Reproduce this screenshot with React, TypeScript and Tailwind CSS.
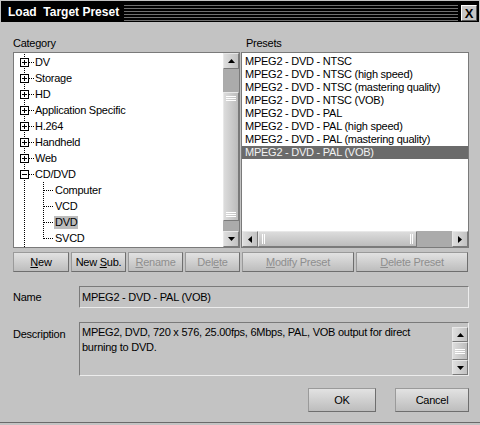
import React from "react";

const topItems = ["DV", "Storage", "HD", "Application Specific", "H.264", "Handheld", "Web"];
const dvdChildren = ["Computer", "VCD", "DVD", "SVCD"];
const presets = [
    "MPEG2 - DVD - NTSC",
    "MPEG2 - DVD - NTSC (high speed)",
    "MPEG2 - DVD - NTSC (mastering quality)",
    "MPEG2 - DVD - NTSC (VOB)",
    "MPEG2 - DVD - PAL",
    "MPEG2 - DVD - PAL (high speed)",
    "MPEG2 - DVD - PAL (mastering quality)",
    "MPEG2 - DVD - PAL (VOB)",
];

function Arrow({dir}: {dir: "up" | "down" | "left" | "right"}) {
    const pts = {
        up: "0,4 7,4 3.5,0",
        down: "0,0 7,0 3.5,4",
        left: "4,0 4,7 0,3.5",
        right: "0,0 0,7 4,3.5",
    }[dir];
    const vertical = dir === "up" || dir === "down";
    return <svg width={vertical ? 7 : 4} height={vertical ? 4 : 7}>
        <polygon points={pts} fill="#000"/>
    </svg>
}

function ScrollBtn({dir, className = ""}: {dir: "up" | "down" | "left" | "right", className?: string}) {
    return <div
        className={`flex items-center justify-center border border-t-[#e8e8e8] border-l-[#e8e8e8] border-b-[#7a7a7a] border-r-[#7a7a7a] bg-linear-to-r from-[#dedede] to-[#c2c2c2] ${className}`}>
        <Arrow dir={dir}/>
    </div>
}

function Grip({vertical}: {vertical: boolean}) {
    if (vertical) {
        return <div className="flex flex-col gap-[1px] px-[2px]">
            <div className="h-[1px] bg-white"/>
            <div className="h-[1px] bg-white"/>
            <div className="h-[1px] bg-white"/>
        </div>
    }
    return <div className="flex gap-[1px] py-[2px] h-full">
        <div className="w-[1px] bg-white"/>
        <div className="w-[1px] bg-white"/>
    </div>
}

function TopGutter({open}: {open: boolean}) {
    return <svg width={20} height={16} className="shrink-0" shapeRendering="crispEdges">
        <line x1={10.5} y1={0} x2={10.5} y2={16} stroke="#000" strokeDasharray="1 1"/>
        <line x1={15} y1={8.5} x2={20} y2={8.5} stroke="#000" strokeDasharray="1 1"/>
        <rect x={6.5} y={4.5} width={8} height={8} fill="#fff" stroke="#000"/>
        <line x1={8} y1={8.5} x2={13} y2={8.5} stroke="#000"/>
        {!open && <line x1={10.5} y1={6} x2={10.5} y2={11} stroke="#000"/>}
    </svg>
}

function ChildGutter({last}: {last: boolean}) {
    return <svg width={40} height={16} className="shrink-0" shapeRendering="crispEdges">
        <line x1={10.5} y1={0} x2={10.5} y2={16} stroke="#000" strokeDasharray="1 1"/>
        <line x1={29.5} y1={0} x2={29.5} y2={last ? 9 : 16} stroke="#000" strokeDasharray="1 1"/>
        <line x1={30} y1={8.5} x2={39} y2={8.5} stroke="#000" strokeDasharray="1 1"/>
    </svg>
}

function Button({children, width, height = "h-[20px]", disabled = false}: {
    children: React.ReactNode,
    width: string,
    height?: string,
    disabled?: boolean
}) {
    return <div
        className={`${width} ${height} flex items-center justify-center border border-t-[#9a9a9a] border-l-[#9a9a9a] border-b-[#6e6e6e] border-r-[#6e6e6e] bg-linear-to-b from-[#e2e2e2] to-[#bdbdbd] ${disabled ? "text-[#8e8e8e]" : "text-black"}`}>
        <span>{children}</span>
    </div>
}

export default function App() {
    return <div
        className="w-[480px] h-[425px] bg-[#c3c3c3] overflow-hidden font-['Liberation_Sans',Arial,sans-serif] text-[11px] tracking-[-0.25px] text-black">
        <div className="h-[423px] flex flex-col border-b border-[#6a6a6a] pt-[1px] px-[1px]">
            <div className="h-[21px] bg-black flex">
                <div className="ml-[7px] self-center text-white font-bold text-[12px] tracking-normal whitespace-pre leading-none">
                    Load  Target Preset
                </div>
                <div
                    className="ml-[5px] mt-[2px] h-[18px] flex-1 bg-[repeating-linear-gradient(to_bottom,#000_0px,#000_2px,#707070_2px,#707070_3px)]"/>
                <div
                    className="ml-[3px] mr-[2px] mt-[4px] w-[16px] h-[16px] flex items-center justify-center bg-[#c6c6c6] border border-t-white border-l-white border-b-[#5a5a5a] border-r-[#5a5a5a] font-bold text-[13px] leading-none tracking-normal">
                    X
                </div>
            </div>

            <div className="flex flex-col pl-[12px] pr-[10px]">
                <div className="flex gap-[1px] mt-[14px] h-[14px] leading-[14px]">
                    <div className="w-[227px]">Category</div>
                    <div className="flex-1 pl-[5px]">Presets</div>
                </div>

                <div className="flex gap-[1px] mt-[2px] h-[196px]">
                    <div className="w-[227px] border border-[#7a7a7a] flex">
                        <div className="flex-1 bg-white pt-[1px] overflow-hidden">
                            {topItems.map(item => (
                                <div key={item} className="flex items-center h-[16px] leading-[16px] whitespace-nowrap">
                                    <TopGutter open={false}/>
                                    <span className="px-[1px]">{item}</span>
                                </div>
                            ))}
                            <div className="flex items-center h-[16px] leading-[16px]">
                                <TopGutter open={true}/>
                                <span className="px-[1px]">CD/DVD</span>
                            </div>
                            {dvdChildren.map((item, i) => (
                                <div key={item} className="flex items-center h-[16px]">
                                    <ChildGutter last={i === dvdChildren.length - 1}/>
                                    <span
                                        className={`px-[1px] h-[13px] leading-[13px] ${item === "DVD" ? "bg-[#bcbcbc]" : ""}`}>{item}</span>
                                </div>
                            ))}
                            <div className="flex h-[16px]">
                                <svg width={20} height={16} shapeRendering="crispEdges">
                                    <line x1={10.5} y1={0} x2={10.5} y2={16} stroke="#000" strokeDasharray="1 1"/>
                                </svg>
                            </div>
                        </div>
                        <div className="w-[16px] flex flex-col bg-[#ababab]">
                            <ScrollBtn dir="up" className="h-[16px]"/>
                            <div className="h-[23px]"/>
                            <div
                                className="h-[129px] flex flex-col justify-between py-[3px] border border-t-[#e8e8e8] border-l-[#e8e8e8] border-b-[#7a7a7a] border-r-[#7a7a7a] bg-linear-to-r from-[#dcdcdc] to-[#bcbcbc]">
                                <Grip vertical={true}/>
                                <Grip vertical={true}/>
                            </div>
                            <div className="flex-1"/>
                            <ScrollBtn dir="down" className="h-[16px]"/>
                        </div>
                    </div>

                    <div className="flex-1 border border-[#7a7a7a] flex flex-col">
                        <div className="flex-1 bg-white pt-[2px] overflow-hidden">
                            {presets.map((p, i) => (
                                <div key={p}
                                     className={`h-[13px] leading-[13px] pl-[3px] whitespace-nowrap ${i === presets.length - 1 ? "bg-[#6b6b6b] text-[#f2f2f2]" : ""}`}>
                                    {p}
                                </div>
                            ))}
                        </div>
                        <div className="h-[16px] flex bg-[#ababab]">
                            <ScrollBtn dir="left" className="w-[16px]"/>
                            <div
                                className="w-[159px] flex justify-between px-[3px] border border-t-[#e8e8e8] border-l-[#e8e8e8] border-b-[#7a7a7a] border-r-[#7a7a7a] bg-linear-to-b from-[#dcdcdc] to-[#bcbcbc]">
                                <Grip vertical={false}/>
                                <Grip vertical={false}/>
                            </div>
                            <div className="flex-1"/>
                            <ScrollBtn dir="right" className="w-[16px]"/>
                        </div>
                    </div>
                </div>

                <div className="flex gap-[2px] mt-[4px]">
                    <Button width="w-[56px]"><span className="underline">N</span>ew</Button>
                    <Button width="w-[55px]">New <span className="underline">S</span>ub.</Button>
                    <Button width="w-[55px]" disabled><span className="underline">R</span>ename</Button>
                    <Button width="w-[55px]" disabled>Del<span className="underline">e</span>te</Button>
                    <Button width="w-[112px]" disabled><span className="underline">M</span>odify Preset</Button>
                    <Button width="w-[112px]" disabled><span className="underline">D</span>elete Preset</Button>
                </div>

                <div className="flex items-center mt-[14px] h-[22px]">
                    <div className="w-[66px]">Name</div>
                    <div
                        className="flex-1 h-full pl-[2px] leading-[20px] border border-t-[#7a7a7a] border-l-[#7a7a7a] border-b-[#ececec] border-r-[#ececec]">
                        MPEG2 - DVD - PAL (VOB)
                    </div>
                </div>

                <div className="flex mt-[14px] h-[54px]">
                    <div className="w-[66px] pt-[5px] leading-[14px]">Description</div>
                    <div
                        className="flex-1 flex border border-t-[#7a7a7a] border-l-[#7a7a7a] border-b-[#ececec] border-r-[#ececec]">
                        <div className="flex-1 pl-[2px] pt-[2px] leading-[15px]">
                            MPEG2, DVD, 720 x 576, 25.00fps, 6Mbps, PAL, VOB output for direct<br/>burning to DVD.
                        </div>
                        <div className="w-[16px] mt-[4px] h-[48px] flex flex-col">
                            <ScrollBtn dir="up" className="h-[15px]"/>
                            <div
                                className="h-[18px] flex flex-col justify-center border border-t-[#e8e8e8] border-l-[#e8e8e8] border-b-[#7a7a7a] border-r-[#7a7a7a] bg-linear-to-r from-[#dcdcdc] to-[#bcbcbc]">
                                <Grip vertical={true}/>
                            </div>
                            <ScrollBtn dir="down" className="h-[15px]"/>
                        </div>
                    </div>
                </div>

                <div className="flex justify-end gap-[19px] mt-[12px]">
                    <Button width="w-[68px]" height="h-[24px]">OK</Button>
                    <Button width="w-[74px]" height="h-[24px]">Cancel</Button>
                </div>
            </div>
        </div>
    </div>
}
